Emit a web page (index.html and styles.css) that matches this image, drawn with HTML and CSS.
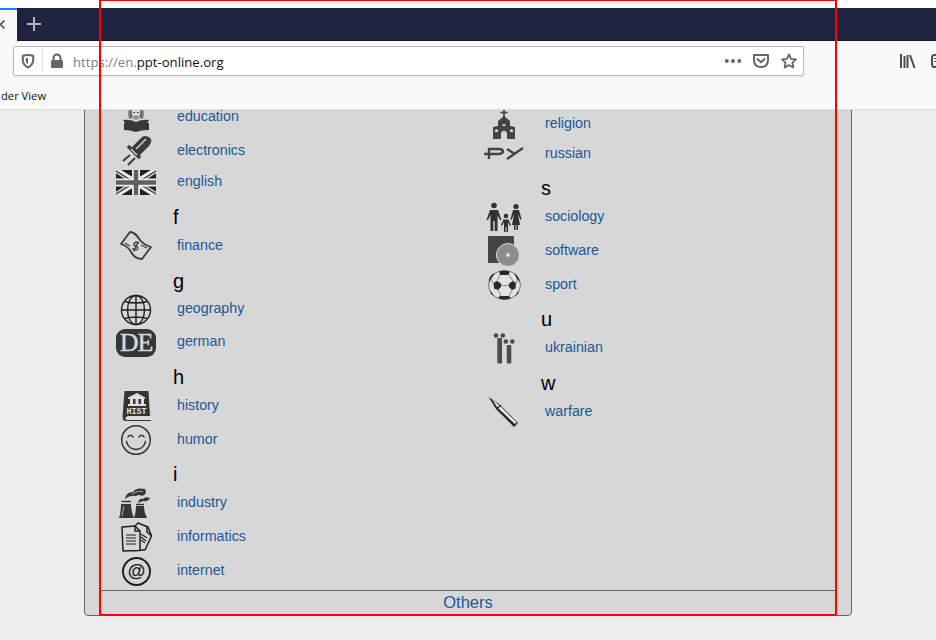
FILE: index.html
```html
<!DOCTYPE html>
<html lang="en">
<head>
<meta charset="utf-8">
<title>ppt-online.org</title>
<link rel="stylesheet" href="styles.css">
</head>
<body>
<div class="window">
  <div class="tabs">
    <div class="tab"><svg width="17" height="30" viewBox="0 0 17 30"><path d="M-4 10.500L0 14.500L-4 18.500M4.500 10.500L.5 14.500L4.500 18.500" fill="none" stroke="#555" stroke-width="1.700"/></svg></div>
    <svg class="plus" width="34" height="32" viewBox="0 0 34 32"><path d="M10 16H24M17 9V23" stroke="#b5b6c1" stroke-width="2"/></svg>
  </div>
  <div class="toolbar">
    <div class="urlbar">
      <svg width="28" height="28" viewBox="0 0 28 28"><path d="M8.800 9Q14 7 19.200 9V13Q19 18 14 20.500Q9 18 8.800 13Z" fill="none" stroke="#666" stroke-width="2" stroke-linejoin="round"/><path d="M14 10.800V17.500Q11.500 16 11.500 11.500Z" fill="#666"/></svg>
      <span class="sep"></span>
      <svg width="28" height="28" viewBox="0 0 28 28"><rect x="8" y="13" width="12" height="8" rx="1.500" fill="#666"/><path d="M10.500 14V11a3.500 3.500 0 0 1 7 0V14" fill="none" stroke="#666" stroke-width="2"/></svg>
      <span class="url">https://en.<b>ppt-online.org</b></span>
      <svg class="actions" width="83" height="28" viewBox="0 0 83 28"><g fill="#666"><circle cx="6.800" cy="14" r="2"/><circle cx="13" cy="14" r="2"/><circle cx="19.200" cy="14" r="2"/></g><g fill="none" stroke="#666" stroke-width="2" stroke-linejoin="round" stroke-linecap="round"><path d="M34 8H48V13Q48 20 41 20Q34 20 34 13Z"/><path d="M37.500 12L41 15.300L44.500 12"/><path d="M69 7.500L71.100 11.800L76 12.300L72.400 15.600L73.400 20.500L69 18.100L64.600 20.500L65.600 15.600L62 12.300L66.900 11.800Z" stroke-width="1.800"/></g></svg>
    </div>
    <svg class="tools" width="40" height="30" viewBox="0 0 40 30"><path d="M5 8V22M8.500 10V22M11.500 9V22M14 9L18.500 22" fill="none" stroke="#4c4c4c" stroke-width="2"/><rect x="36" y="9" width="14" height="12" rx="2.500" fill="none" stroke="#4c4c4c" stroke-width="2"/><path d="M38 12.500H44M38 15.500H44" stroke="#4c4c4c"/></svg>
  </div>
  <div class="bookmarks">der View</div>
  <div class="page">
    <div class="panel">
      <div class="columns">
        <div class="col">
          <div class="row first"><svg width="40" height="30" viewBox="0 0 40 30"><path d="M13 17Q11 10 14 5Q20 1 26 5Q29 10 27 17L24 16V8H16V16Z" fill="#777"/><path d="M15 8Q15 17 20 17Q25 17 25 8" fill="#d8d8d8" stroke="#555"/><path d="M17 10.500H19M21 10.500H23M18 14Q20 15.500 22 14" fill="none" stroke="#444"/><path d="M7 18Q14 17 20 20Q26 17 33 18L31.500 21H33V28Q25 28 20 30Q14 28 8 28V21H9Z" fill="#383838"/></svg><a>education</a></div>
          <div class="row"><svg width="40" height="30" viewBox="0 0 40 30"><path d="M15 12L26 1Q31-2 35 3Q36 6 33 10L22 21Z" fill="#3c3c3c"/><path d="M12 10L24 22" stroke="#3c3c3c" stroke-width="3.500"/><path d="M14 19L7 25M19 22L12 29" stroke="#3c3c3c" stroke-width="2"/><path d="M20 13L30 3M15 13L21 19" stroke="#ddd" stroke-width="1.300"/></svg><a>electronics</a></div>
          <div class="row flag"><svg width="40" height="25" viewBox="0 0 40 25"><path fill="#222" d="M0 0H40V25H0Z"/><path d="M0 0L40 25M40 0L0 25" stroke="#eee" stroke-width="5.500"/><path d="M0 1L16 11M24 11L40 1M0 24L16 14M24 14L40 24" stroke="#555" stroke-width="1.600"/><path d="M20 0V25M0 12.500H40" stroke="#eee" stroke-width="8"/><path d="M20 0V25M0 12.500H40" stroke="#606060" stroke-width="4.500"/></svg><a>english</a></div>
          <h2>f</h2>
          <div class="row"><svg width="40" height="30" viewBox="0 0 40 30"><path d="M14 1Q19 1 24 9Q28 14 35 16L26 28Q19 28 15 21Q12 15 5 13Z" fill="none" stroke="#3b3b3b" stroke-width="1.800" stroke-linejoin="round"/><path d="M9 12L14 15M25 14L31 17" stroke="#444" stroke-width="1.300"/><path d="M23 12Q19 10 18 13Q18 15 21 15.500Q23 18 20 19Q17 19 17 17M22.500 10.500L17.500 20.500" fill="none" stroke="#444" stroke-width="1.500"/></svg><a>finance</a></div>
          <h2>g</h2>
          <div class="row up"><svg width="40" height="30" viewBox="0 0 40 30"><g fill="none" stroke="#202020" stroke-width="1.400"><circle cx="20" cy="15" r="14.500"/><ellipse cx="20" cy="15" rx="8.500" ry="14.500"/><path d="M20 .5V29.500M5.500 15H34.500M9 6.500Q20 9.500 31 6.500M9 23.500Q20 20.500 31 23.500"/></g></svg><a>geography</a></div>
          <div class="row badge up"><span class="de">DE</span><a>german</a></div>
          <h2>h</h2>
          <div class="row"><svg width="40" height="30" viewBox="0 0 40 30"><path d="M8.500 0H32.500L34 25H11V29H35V30H9Q6.500 29 6.500 26Z" fill="#353535"/><path d="M10 26H34.500V28.800H10Q8.500 27.500 10 26Z" fill="#ddd"/><path d="M12 6.500L21 2L29 6.500V8H12ZM14 8H17V13H14ZM19.500 8H22.500V13H19.500ZM25 8H28V13H25ZM12 13H30V15H12Z" fill="#e0e0e0"/><text x="10.500" y="23" class="hist" textLength="20" lengthAdjust="spacingAndGlyphs">HIST</text></svg><a>history</a></div>
          <div class="row"><svg width="40" height="30" viewBox="0 0 40 30"><g fill="none" stroke="#363636" stroke-width="1.500" stroke-linecap="round"><circle cx="20" cy="15" r="14.300"/><path d="M12 12Q14.500 8.500 17 12M23 12Q25.500 8.500 28 12M10.500 16.500C12.500 27 27.500 27 29.500 16.500"/></g></svg><a>humor</a></div>
          <h2 class="short">i</h2>
          <div class="row"><svg width="40" height="30" viewBox="0 0 40 30"><path d="M5 16H15Q15 23 18 30H3Q5 25 5 16ZM20 18H28Q28 25 31 30H18Q20 25 20 18Z" fill="#363636"/><path d="M5.500 13.500H15M20 16.500H28" stroke="#363636" stroke-width="1.500"/><path d="M9 11Q10 4 17 4Q20-1 29 1Q32 6 26 8Q23 6 20 8Q14 7 9 11ZM22 15Q23 10 27 11Q29 8 34 10Q32 14 27 13Z" fill="#363636"/><path d="M16 6Q23 2 27 4" fill="none" stroke="#aaa"/><path d="M8 18L6 28" stroke="#aaa"/></svg><a>industry</a></div>
          <div class="row"><svg width="40" height="30" viewBox="0 0 40 30"><g fill="none" stroke="#202020" stroke-width="1.500" stroke-linejoin="round"><path d="M6 5L19 4L24 9V28.500L7 29Z"/><path d="M19 4L22 1L32 5L35.500 14L29 28H24"/><path d="M31 5V10L35.500 14M19 4V9H24"/><path d="M10 13H20M10 16H20M10 19H20M10 22H20M25 12L31 16M25 15L30 19M25 18L29 21" stroke-width="1.100"/></g></svg><a>informatics</a></div>
          <div class="row"><svg width="40" height="30" viewBox="0 0 40 30"><circle cx="20.500" cy="15.500" r="13.500" fill="none" stroke="#1c1c1c" stroke-width="1.900"/><text x="20.500" y="20.500" class="at">@</text></svg><a>internet</a></div>
        </div>
        <div class="col right">
          <div class="row"><svg width="40" height="30" viewBox="0 0 40 30"><path d="M20 1V9M16.500 3.500H23.500" stroke="#444" stroke-width="1.700"/><path d="M14 12L20 7L26 12V17L31 18V30H23V24Q20 19 17 24V30H9V18L14 17Z" fill="#444"/><path d="M11 23V21.500Q12.500 19 14 21.500V23ZM26 23V21.500Q27.500 19 29 21.500V23ZM18 17Q20 13 22 17Z" fill="#ddd"/></svg><a>religion</a></div>
          <div class="row script"><svg width="40" height="12" viewBox="0 0 40 12"><g fill="none" stroke="#444" stroke-width="2.400"><path d="M5 11V1H15Q19 1 19 4Q18 6 14 6H0M23 1L31 6M39 0L23 11"/></g></svg><a>russian</a></div>
          <h2>s</h2>
          <div class="row"><svg width="40" height="30" viewBox="0 0 40 30"><g fill="#303030"><circle cx="10" cy="3.500" r="2.800"/><circle cx="32" cy="4.500" r="2.600"/><circle cx="22" cy="14" r="2.300"/><path d="M6 8H14L17.500 18H16L13.500 13V29H10.700V19H9.300V29H6.500V13L4 18H2.500ZM29 8H35L37.500 17L36.500 18L34 12L36 23H34V28H32.500V23H31.500V28H30V23H28L30 12L27.500 18L26.500 17ZM19.500 17.500H24.500L27 23L26 24L24 20V30H22.500V25H21.500V30H20V20L18 24L17 23Z"/></g></svg><a>sociology</a></div>
          <div class="row"><svg width="40" height="30" viewBox="0 0 40 30"><rect x="4" width="26" height="27" rx="1" fill="#444"/><circle cx="24" cy="19" r="11.500" fill="#8d8d8d" stroke="#e2e2e2"/><circle cx="24" cy="19" r="2" fill="#eee" stroke="#aaa"/></svg><a>software</a></div>
          <div class="row"><svg width="40" height="30" viewBox="0 0 40 30"><ellipse cx="20.500" cy="15" rx="16" ry="14.500" fill="#e2e2e2" stroke="#777"/><path d="M15 1.500L20 .5L26 1.500L24.500 5H16ZM5 9Q7 4 11 3L7 9L5 13ZM30 3Q34 5 36 12L33 9ZM9.500 13L13 11L17 13.500V17L14 20L10 18.500ZM25 13.500L29 11L32 13L31.500 18.500L28 20L25 17ZM6 20L10 26L7 24ZM16 26H25L27 28Q20 31 14 28ZM31 26L35 20L34 24Z" fill="#282828"/><path d="M17 15.500H25M13 11L16 5M29 11L25 5M14 20L17 26M28 20L25 26M7 9L9 13M33 9V13" stroke="#888"/></svg><a>sport</a></div>
          <h2 class="short">u</h2>
          <div class="row"><svg width="40" height="30" viewBox="0 -1 40 30"><g fill="#4c4c4c"><circle cx="12" cy="1.500" r="2.300"/><circle cx="18.800" cy="1.500" r="2.300"/><circle cx="21.800" cy="7.500" r="2.300"/><circle cx="28.300" cy="7.500" r="2.300"/><rect x="13.300" y="4" width="4.700" height="25.500" rx=".7"/><rect x="22.800" y="11" width="4.500" height="18.500" rx=".7"/></g></svg><a>ukrainian</a></div>
          <h2>w</h2>
          <div class="row"><svg width="40" height="30" viewBox="0 -1 40 30"><path d="M4.500-1L15 6L34 25L30 29L12 11Z" fill="#292929"/><path d="M8 1.500L16 8L32.500 24.500L31 26L13.500 9.500Z" fill="#f0f0f0"/><path d="M12.500 11L17 7" stroke="#292929" stroke-width="1.500"/></svg><a>warfare</a></div>
        </div>
      </div>
      <div class="others"><a>Others</a></div>
    </div>
  </div>
  <div class="marker"></div>
</div>
</body>
</html>
```
FILE: styles.css
```css
* { box-sizing: border-box; }
body { margin: 0; background: #ededed; font-family: "Liberation Sans", Arial, sans-serif; }
svg { display: block; flex: none; overflow: visible; }
.window { position: relative; width: 936px; height: 640px; overflow: hidden; display: flex; flex-direction: column; }
.tabs { height: 41px; border-top: 8px solid #fff; border-bottom: 1px solid #14162f; background: #202340; display: flex; flex: none; }
.tab { width: 17px; height: 33px; background: #f9f9f9; border-top: 2px solid #0a84ff; overflow: hidden; }
.tab svg { overflow: hidden; }
.toolbar { height: 40px; flex: none; background: #f9f9f9; display: flex; padding: 5px 0 0 13px; }
.urlbar { width: 791px; height: 30px; border: 1px solid #b9b9b9; border-radius: 2px; background: #fff; display: flex; align-items: center; box-shadow: 0 1px 3px #0001; }
.sep { width: 1px; height: 22px; background: #ddd; }
.url { font: 13.150px/28px "Open Sans", sans-serif; color: #808080; margin: 2px 0 0 2px; white-space: nowrap; }
.url b { color: #111; font-weight: 400; }
.actions { margin-left: auto; }
.tools { margin-left: 92px; }
.bookmarks { height: 29px; flex: none; background: #f9f9f9; border-bottom: 1px solid #dedede; padding-left: 1px; font: 11.200px/30px "Open Sans", sans-serif; color: #111; }
.page { flex: 1; overflow: hidden; }
.panel { width: 768px; height: 520px; margin: -14px 0 0 84px; padding: 5px 15px 0; border: 1px solid #666; border-radius: 4px; background: #d7d7d7; }
.columns { height: 488px; display: flex; }
.col { width: 368px; padding: 0 0 0 16px; }
.right { padding-top: 7px; }
.row { height: 30px; margin-bottom: 4px; display: flex; align-items: center; gap: 21px; }
.row a { color: #1a5898; font-size: 14.250px; line-height: 20px; margin-top: -2px; }
.first a { line-height: 12px; }
.flag { height: 27px; }
.flag svg { align-self: flex-start; overflow: hidden; }
.flag a { margin-top: -5px; }
.badge { height: 28px; }
.up a { margin-top: -4px; }
.script { height: 22px; margin-bottom: 7px; }
h2 { margin: 0; height: 30px; padding-left: 57px; font-size: 20px; line-height: 33px; font-weight: 400; color: #000; }
.short { height: 29px; line-height: 31px; }
.de { width: 40px; height: 28px; border-radius: 9px; background: #363636; color: #d8d8d8; font: 26px/27px "Liberation Serif", serif; text-align: center; letter-spacing: -1px; -webkit-text-stroke: .4px #d8d8d8; }
.hist { font: bold 9px "Liberation Mono", monospace; fill: #e0e0e0; }
.at { font: bold 18px "Liberation Sans", sans-serif; fill: #1c1c1c; text-anchor: middle; }
.others { height: 25px; border-top: 1px solid #666; text-align: center; color: #1a5898; font-size: 16.500px; line-height: 22px; }
.marker { position: absolute; left: 99px; top: 0; width: 738px; height: 616px; border: 2px solid #f00; border-top-width: 1px; }
```
